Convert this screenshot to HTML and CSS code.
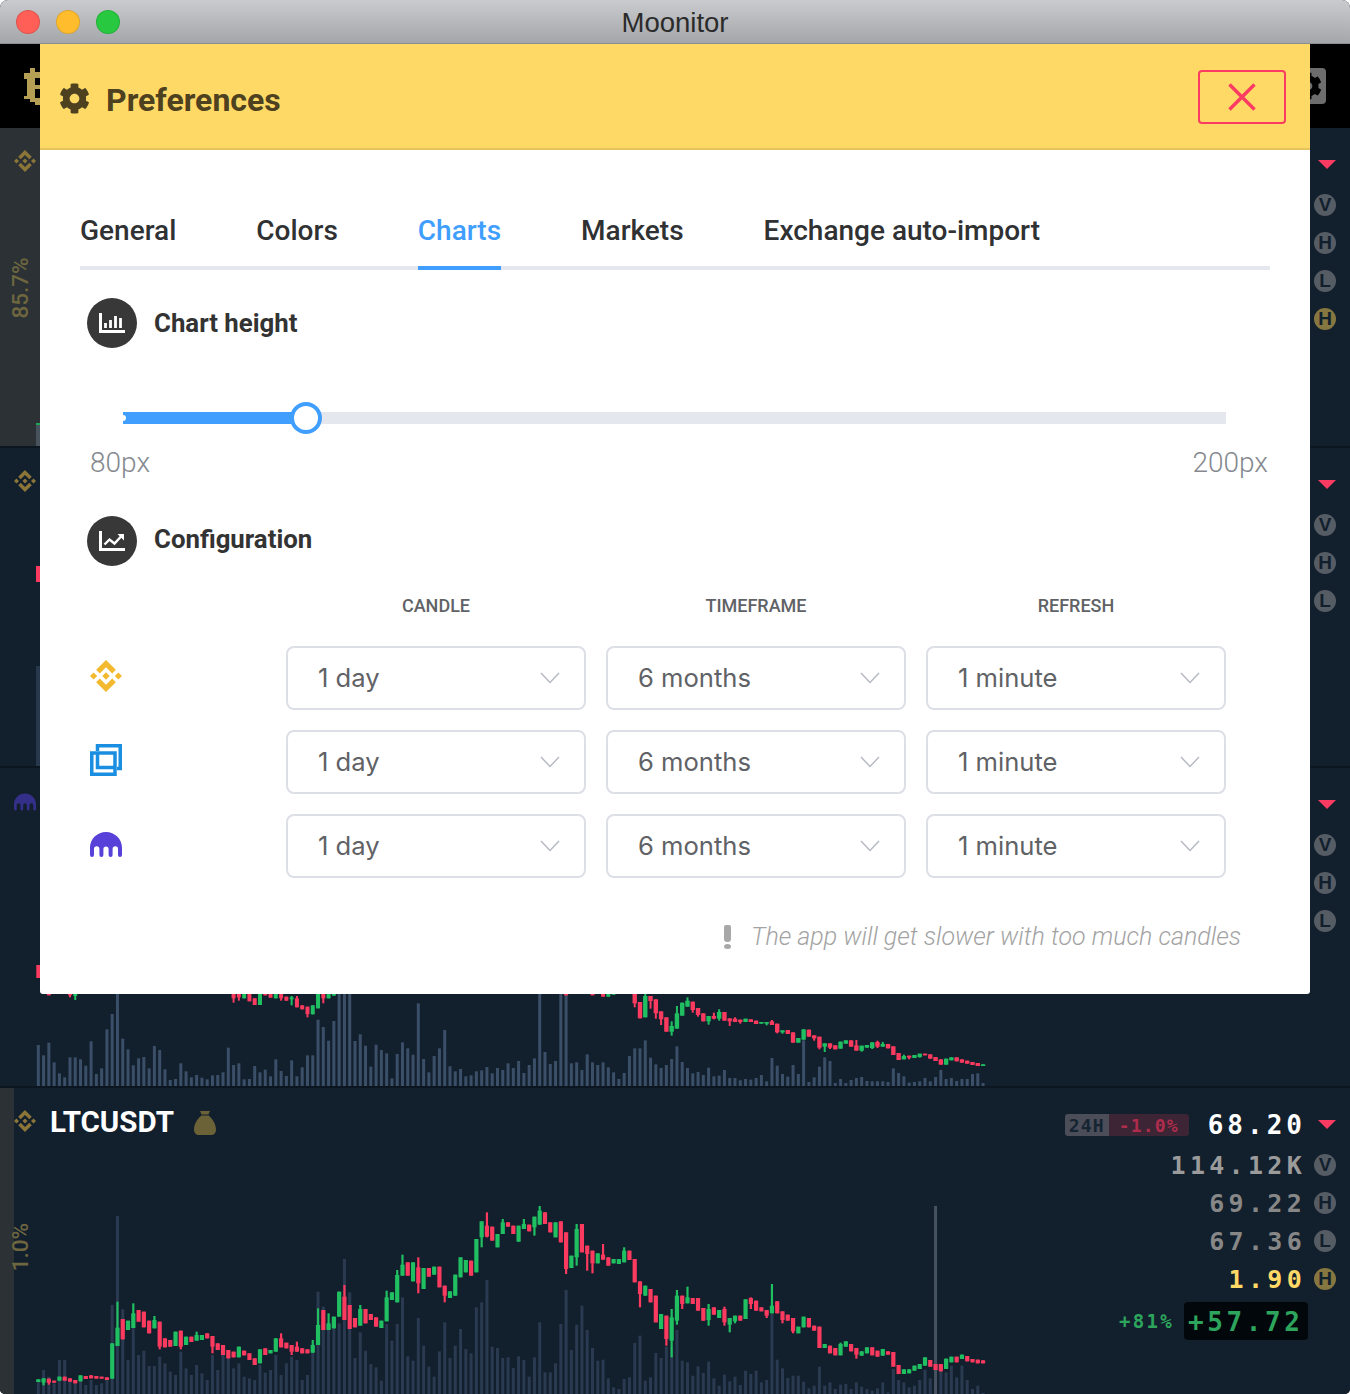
FILE: index.html
```html
<!DOCTYPE html>
<html lang="en">
<head>
<meta charset="utf-8">
<title>Moonitor</title>
<link rel="stylesheet" href="styles.css">
</head>
<body>
<svg class="defs" aria-hidden="true">
  <symbol id="binance" viewBox="0 0 126.61 126.61"><path d="M38.73 53.2L63.3 28.63l24.59 24.59 14.3-14.3L63.3 0 24.43 38.88l14.3 14.32zM0 63.31l14.3-14.3 14.3 14.3-14.3 14.3zM38.73 73.41L63.3 97.98l24.59-24.58 14.31 14.29-38.9 38.91-38.86-38.88-.02-.02 14.31-14.29zM97.99 63.31l14.3-14.3 14.3 14.3-14.3 14.3zM77.83 63.3L63.3 48.76 52.55 59.5l-1.24 1.24-2.54 2.55 14.53 14.53 14.53-14.51z"/></symbol>
  <symbol id="kraken" viewBox="0 0 32 25"><path d="M16 0C7.2 0 0 7 0 15.5V23a2 2 0 0 0 4 0v-6a2.7 2.7 0 0 1 5.4 0v6a2 2 0 0 0 4 0v-6a2.6 2.6 0 0 1 5.2 0v6a2 2 0 0 0 4 0v-6a2.7 2.7 0 0 1 5.4 0v6a2 2 0 0 0 4 0v-7.5C32 7 24.8 0 16 0z"/></symbol>
  <symbol id="cog" viewBox="0 0 512 512"><path d="M487.4 315.7l-42.6-24.6c4.3-23.2 4.3-47 0-70.2l42.6-24.6c4.9-2.8 7.1-8.6 5.5-14-11.1-35.6-30-67.8-54.7-94.6-3.8-4.1-10-5.1-14.8-2.3L380.8 110c-17.9-15.4-38.5-27.3-60.8-35.1V25.8c0-5.6-3.9-10.5-9.4-11.7-36.7-8.2-74.3-7.8-109.2 0-5.5 1.2-9.4 6.1-9.4 11.7V75c-22.2 7.9-42.8 19.8-60.8 35.1L88.7 85.5c-4.9-2.8-11-1.9-14.8 2.3-24.7 26.7-43.6 58.9-54.7 94.6-1.7 5.4.6 11.2 5.5 14L67.3 221c-4.3 23.2-4.3 47 0 70.2l-42.6 24.6c-4.9 2.8-7.1 8.6-5.5 14 11.1 35.6 30 67.8 54.7 94.6 3.8 4.1 10 5.1 14.8 2.3l42.6-24.6c17.9 15.4 38.5 27.3 60.8 35.1v49.2c0 5.6 3.9 10.5 9.4 11.7 36.7 8.2 74.3 7.8 109.2 0 5.5-1.2 9.4-6.1 9.4-11.7v-49.2c22.2-7.9 42.8-19.8 60.8-35.1l42.6 24.6c4.9 2.8 11 1.9 14.8-2.3 24.7-26.7 43.6-58.9 54.7-94.6 1.5-5.5-.7-11.3-5.6-14.1zM256 336c-44.1 0-80-35.9-80-80s35.9-80 80-80 80 35.9 80 80-35.9 80-80 80z"/></symbol>
  <symbol id="chevron" viewBox="0 0 20 12"><path d="M1 1l9 9.5L19 1" fill="none" stroke="currentColor" stroke-width="1.4"/></symbol>
</svg>

<div class="app">
  <header class="titlebar">
    <div class="lights"><span class="light light-red"></span><span class="light light-yellow"></span><span class="light light-green"></span></div>
    <div class="app-name">Moonitor</div>
  </header>

  <div class="topbar">
    <svg class="btc" viewBox="0 0 16 37"><path d="M6 0h5v4h5v33H11v-3H6v-3H0v-3h3V11H0V5h6zM11 10v7h5v-7zM11 21v9h5v-9z" fill-rule="evenodd"/></svg>
    <svg class="top-cog" viewBox="0 0 36 36"><rect width="36" height="36" rx="4" fill="#6d6d6d"/><use href="#cog" x="4" y="4" width="28" height="28" fill="#000"/></svg>
  </div>

  <section class="row row-tall">
    <div class="strip strip-main"></div>
    <svg class="chart" viewBox="0 128 1000 318" width="1000" height="318"><rect x="36" y="423" width="4" height="2" fill="#20a558"/><rect x="36" y="425" width="4" height="21" fill="#47525c"/></svg>
    <svg class="pair-icon icon-binance"><use href="#binance"/></svg>
    <div class="strip-label strip-label-a">85.7%</div>
    <div class="stats">
      <div class="stat stat-first"><span class="arrow"></span></div>
      <div class="stat"><span class="badge">V</span></div>
      <div class="stat"><span class="badge">H</span></div>
      <div class="stat"><span class="badge">L</span></div>
      <div class="stat"><span class="badge badge-gold">H</span></div>
    </div>
  </section>

  <section class="row">
    <svg class="chart" viewBox="0 448 1000 318" width="1000" height="318"><rect x="36" y="566" width="4" height="16" fill="#fa3a5e"/><rect x="36" y="666" width="4" height="100" fill="#28384c"/></svg>
    <svg class="pair-icon icon-binance"><use href="#binance"/></svg>
    <div class="stats">
      <div class="stat stat-first"><span class="arrow"></span></div>
      <div class="stat"><span class="badge">V</span></div>
      <div class="stat"><span class="badge">H</span></div>
      <div class="stat"><span class="badge">L</span></div>
    </div>
  </section>

  <section class="row">
    <svg class="chart" id="chart-a" viewBox="0 768 1000 318" width="1000" height="318"></svg>
    <svg class="pair-icon icon-kraken"><use href="#kraken"/></svg>
    <div class="stats">
      <div class="stat stat-first"><span class="arrow"></span></div>
      <div class="stat"><span class="badge">V</span></div>
      <div class="stat"><span class="badge">H</span></div>
      <div class="stat"><span class="badge">L</span></div>
    </div>
  </section>

  <section class="row row-last">
    <div class="strip strip-small"></div>
    <svg class="chart chart-soft" id="chart-b" viewBox="0 1088 1000 306" width="1000" height="306"></svg>
    <div class="pair">
      <svg class="pair-icon icon-binance"><use href="#binance"/></svg>
      <span class="pair-name">LTCUSDT</span>
      <svg class="bag" viewBox="0 0 22 24"><path d="M6 0h10l-1.6 3.4H7.6zM7.4 4.600h7.200C19 8.400 22 13.600 22 18.400 22 21.800 20 24 17 24H5c-3 0-5-2.200-5-5.600C0 13.600 3 8.400 7.400 4.600z"/></svg>
    </div>
    <div class="strip-label strip-label-b">1.0%</div>
    <div class="stats">
      <div class="stat stat-first">
        <span class="change"><span class="change-key">24H</span><span class="change-val">-1.0%</span></span>
        <span class="value value-price">68.20</span>
        <span class="arrow"></span>
      </div>
      <div class="stat"><span class="value value-vol">114.12K</span><span class="badge">V</span></div>
      <div class="stat"><span class="value value-dim">69.22</span><span class="badge">H</span></div>
      <div class="stat"><span class="value value-dim">67.36</span><span class="badge">L</span></div>
      <div class="stat"><span class="value value-gold">1.90</span><span class="badge badge-gold">H</span></div>
      <div class="stat stat-gain"><span class="gain-pct">+81%</span><span class="gain-box">+57.72</span></div>
    </div>
  </section>
</div>

<div class="modal">
  <div class="modal-head">
    <svg class="modal-cog"><use href="#cog"/></svg>
    <h1 class="modal-title">Preferences</h1>
    <button class="close"><svg viewBox="0 0 28 28" class="close-x"><path d="M1.500 1.500l25 25M26.500 1.500l-25 25"/></svg></button>
  </div>
  <div class="modal-body">
    <nav class="tabs">
      <span class="tab">General</span>
      <span class="tab">Colors</span>
      <span class="tab tab-active">Charts</span>
      <span class="tab">Markets</span>
      <span class="tab">Exchange auto-import</span>
    </nav>

    <div class="section-head section-first">
      <span class="section-icon"><svg viewBox="0 0 26 20"><path class="ico-axis" d="M1.500 0v18.500H26"/><path class="ico-bars" d="M6.500 10v5M11.500 7v8M16.500 3v12M21.500 5v10"/></svg></span>
      <h2 class="section-title">Chart height</h2>
    </div>
    <div class="slider">
      <div class="slider-fill"></div>
      <div class="slider-thumb"></div>
    </div>
    <div class="slider-labels"><span>80px</span><span>200px</span></div>

    <div class="section-head section-second">
      <span class="section-icon"><svg viewBox="0 0 26 20"><path class="ico-axis" d="M1.500 0v18.500H26"/><path class="ico-line" d="M5.500 13.500l5-5 5 4 6.500-7"/><path class="ico-tip" d="M18.500 3h6.500v6.500z"/></svg></span>
      <h2 class="section-title section-title-up">Configuration</h2>
    </div>

    <div class="config">
      <span></span><span class="col-head">CANDLE</span><span class="col-head">TIMEFRAME</span><span class="col-head">REFRESH</span>

      <svg class="logo logo-binance"><use href="#binance"/></svg>
      <div class="select">1 day<svg class="chevron"><use href="#chevron"/></svg></div>
      <div class="select">6 months<svg class="chevron"><use href="#chevron"/></svg></div>
      <div class="select">1 minute<svg class="chevron"><use href="#chevron"/></svg></div>

      <svg class="logo logo-bittrex" viewBox="0 0 32 32"><path d="M1.750 9h23.250v21.250H1.750zM7.500 7V1.750h22.750v22.750H27"/><path d="M7.500 9v14.500H25"/></svg>
      <div class="select">1 day<svg class="chevron"><use href="#chevron"/></svg></div>
      <div class="select">6 months<svg class="chevron"><use href="#chevron"/></svg></div>
      <div class="select">1 minute<svg class="chevron"><use href="#chevron"/></svg></div>

      <svg class="logo logo-kraken"><use href="#kraken"/></svg>
      <div class="select">1 day<svg class="chevron"><use href="#chevron"/></svg></div>
      <div class="select">6 months<svg class="chevron"><use href="#chevron"/></svg></div>
      <div class="select">1 minute<svg class="chevron"><use href="#chevron"/></svg></div>
    </div>

    <p class="note"><span class="note-mark"></span><em>The app will get slower with too much candles</em></p>
  </div>
</div>
<script src="chart.js"></script>
</body>
</html>
```
FILE: styles.css
```css
* { box-sizing: border-box; }
html, body { margin: 0; padding: 0; background: #fff; }
body { width: 1350px; height: 1394px; overflow: hidden; position: relative; font-family: Roboto, sans-serif; }
.defs { display: none; }

.app { height: 1394px; border-radius: 8px 8px 5px 5px; overflow: hidden; background: #121f2d; display: flex; flex-direction: column; }

.titlebar { height: 44px; flex: none; background: linear-gradient(#c9cbce, #a4a6aa); border-bottom: 1px solid #8b8d92; display: flex; align-items: center; position: relative; }
.lights { display: flex; gap: 16px; padding-left: 16px; }
.light { width: 24px; height: 24px; border-radius: 50%; border: 1px solid rgba(0,0,0,.12); }
.light-red { background: #ff5f57; }
.light-yellow { background: #ffbd2e; }
.light-green { background: #28c940; }
.app-name { position: absolute; left: 0; right: 0; top: 1px; text-align: center; font: 27.5px/44px "Liberation Sans", sans-serif; color: #2b2b2b; }

.topbar { height: 84px; flex: none; background: #000; display: flex; justify-content: space-between; align-items: center; padding: 0 24px 0 24px; }
.btc { width: 16px; height: 37px; fill: #b59f55; }
.top-cog { width: 36px; height: 36px; margin-right: 0; }

.row { height: 320px; flex: none; position: relative; background: #121f2d; border-bottom: 2px solid #0c1621; display: flex; justify-content: flex-end; }
.row-last { flex: 1; border-bottom: 0; }
.strip { position: absolute; left: 0; top: 0; bottom: 0; background: #2b3135; }
.strip-main { width: 85.7%; }
.strip-small { width: 14px; }
.chart { position: absolute; left: 0; top: 0; display: block; }
.chart-soft { filter: blur(.4px); }
.pair-icon { position: absolute; left: 14px; top: 22px; }
.icon-binance { width: 22px; height: 22px; fill: #8c7538; }
.icon-kraken { width: 22px; height: 18px; top: 25px; fill: #342f88; }
.pair { position: absolute; left: 0; top: 0; }
.pair-name { position: absolute; left: 50px; top: 16px; font: 700 29.5px/36px Roboto, sans-serif; color: #fff; white-space: nowrap; }
.bag { position: absolute; left: 194px; top: 23px; width: 22px; height: 24px; fill: #6b6238; }
.strip-label { position: absolute; left: 20px; transform: translate(-50%, -50%) rotate(-90deg); font: 500 22.5px/24px Roboto, sans-serif; color: #6e663f; white-space: nowrap; }
.strip-label-a { top: 160px; }
.strip-label-b { top: 159px; }

.stats { position: relative; width: 400px; padding: 14px 14px 0 0; display: flex; flex-direction: column; font-family: "DejaVu Sans Mono", monospace; font-weight: 700; }
.stat { height: 38px; display: flex; align-items: center; justify-content: flex-end; gap: 6px; }
.stat-first { height: 44px; }
.stat-gain { margin-top: 4px; gap: 10px; padding-right: 28px; }
.arrow { width: 0; height: 0; border-left: 9px solid transparent; border-right: 9px solid transparent; border-top: 9px solid #fb3b62; margin-left: 5px; }
.badge { width: 22px; height: 22px; border-radius: 50%; background: #565c64; color: #121f2d; font: 700 19px/22px "Liberation Sans", sans-serif; text-align: center; flex: none; }
.badge-gold { background: #867640; }
.value { font-size: 25px; line-height: 30px; letter-spacing: 4.300px; margin-top: 2px; margin-right: 2px; }
.value-price { color: #fff; font-size: 26px; letter-spacing: 4px; margin-right: 1px; }
.value-vol { color: #9b9b9b; }
.value-dim { color: #878787; }
.value-gold { color: #ffd965; }
.change { display: flex; height: 22px; margin-top: 2px; border-radius: 3px; overflow: hidden; font-size: 18px; line-height: 23px; letter-spacing: 1.200px; margin-right: 13px; text-align: center; }
.change-key { width: 44px; background: #4b4d58; color: #152433; }
.change-val { width: 80px; background: #3d2536; color: #b02c4c; }
.gain-pct { font-size: 19px; letter-spacing: 2.300px; color: #2da55c; line-height: 40px; }
.gain-box { width: 124px; height: 38px; background: #02070c; border-radius: 4px; color: #2da55c; font-size: 26px; line-height: 40px; letter-spacing: 3.600px; padding-left: 4px; white-space: nowrap; }

.modal { position: absolute; left: 40px; top: 44px; width: 1270px; height: 950px; background: #fff; border-radius: 0 0 3px 3px; display: flex; flex-direction: column; }
.modal-head { height: 106px; flex: none; background: #ffd966; border-bottom: 2px solid #e6c45d; display: flex; align-items: center; padding: 2px 24px 0 19px; }
.modal-cog { width: 31px; height: 31px; fill: #4d4120; flex: none; margin-top: 2px; }
.modal-title { margin: 6px 0 0 16px; flex: 1; font: 700 32px/40px Roboto, sans-serif; color: #4d4120; }
.close { width: 88px; height: 54px; padding: 0; background: transparent; border: 2px solid #fb3b62; border-radius: 4px; display: flex; align-items: center; justify-content: center; }
.close-x { width: 28px; height: 28px; fill: none; stroke: #fb3b62; stroke-width: 3.4; }

.modal-body { padding: 44px 40px 0; flex: 1; }
.tabs { display: flex; gap: 80px; height: 76px; border-bottom: 4px solid #e4e7ed; }
.tab { height: 76px; line-height: 74px; font-size: 28px; font-weight: 500; color: #303133; border-bottom: 4px solid transparent; white-space: nowrap; }
.tab-active { color: #409eff; border-bottom-color: #409eff; }

.section-head { display: flex; align-items: center; gap: 17px; padding-left: 7px; height: 50px; }
.section-first { margin-top: 28px; }
.section-second { margin-top: 36px; }
.section-icon { width: 50px; height: 50px; border-radius: 50%; background: #383838; display: flex; align-items: center; justify-content: center; flex: none; }
.section-icon svg { width: 26px; height: 20px; overflow: visible; }
.ico-axis { fill: none; stroke: #fff; stroke-width: 3; }
.ico-bars { fill: none; stroke: #fff; stroke-width: 2.800; }
.ico-line { fill: none; stroke: #fff; stroke-width: 2.400; }
.ico-tip { fill: #fff; }
.section-title { margin: 0; font: 700 25.800px/34px Roboto, sans-serif; color: #333; }
.section-title-up { margin-top: -4px; }

.slider { position: relative; margin: 64px 44px 0 43px; height: 12px; background: #e4e7ed; }
.slider-fill { position: relative; width: 182px; height: 12px; background: #409eff; }
.slider-fill::before { content: ""; position: absolute; left: -3px; top: 3px; width: 6px; height: 6px; border-radius: 50%; background: #fff; }
.slider-thumb { position: absolute; left: 167px; top: -10px; width: 32px; height: 32px; border-radius: 50%; background: #fff; border: 4px solid #409eff; }
.slider-labels { margin-top: 22px; padding: 0 2px 0 10px; display: flex; justify-content: space-between; font-size: 28px; line-height: 34px; font-weight: 300; color: #85898f; }

.config { margin-top: 30px; padding-left: 10px; display: grid; grid-template-columns: 176px 300px 300px 300px; column-gap: 20px; row-gap: 20px; align-items: center; }
.col-head { text-align: center; font-size: 18px; line-height: 20px; font-weight: 500; color: #606266; margin-bottom: 10px; }
.logo { display: block; width: 32px; height: 32px; }
.logo-binance { fill: #f3ba2f; margin-top: -4px; }
.logo-bittrex { fill: none; stroke: #1a8ee0; stroke-width: 3.500; margin-top: -4px; }
.logo-kraken { fill: #5741d9; height: 25px; margin-top: -3px; }
.select { height: 64px; border: 2px solid #dcdfe6; border-radius: 8px; padding: 0 24px 0 30px; display: flex; align-items: center; justify-content: space-between; font: 25.600px/60px Inter, sans-serif; color: #606266; }
.chevron { width: 20px; height: 12px; color: #b4b8c0; }

.note { margin: 44px 29px 0 0; display: flex; justify-content: flex-end; align-items: center; gap: 20px; font-size: 25px; line-height: 30px; font-weight: 300; color: #a3a3a3; }
.note em { font-style: italic; }
.note-mark { position: relative; width: 7px; height: 24px; }
.note-mark::before { content: ""; position: absolute; left: 0; top: 0; width: 7px; height: 17px; background: #a8a8a8; border-radius: 2px 2px 3px 3px; }
.note-mark::after { content: ""; position: absolute; left: 0; bottom: 0; width: 7px; height: 5px; background: #a8a8a8; border-radius: 50%; }
```
FILE: chart.js
```js
var NS = 'http://www.w3.org/2000/svg';
var RED = '#fa3a5e', GREEN = '#20bf62';
function X(i) { return 38.3 + 5.278 * i; }
function rect(svg, x, y, w, h, fill) {
  var r = document.createElementNS(NS, 'rect');
  r.setAttribute('x', x); r.setAttribute('y', y);
  r.setAttribute('width', w); r.setAttribute('height', Math.max(h, 0));
  r.setAttribute('fill', fill);
  svg.appendChild(r);
}
/* candle: [index, 'r'|'g', bodyTop, bodyBottom, wickTop?, wickBottom?] in zoomed pixels */
function candle(svg, c, y0, bw, ww) {
  var col = c[1] === 'r' ? RED : GREEN, x = X(c[0]);
  var t = y0 + c[2] / 3, b = y0 + c[3] / 3;
  var wt = c[4] ? y0 + c[4] / 3 : t, wb = c[5] ? y0 + c[5] / 3 : b;
  rect(svg, x - ww / 2, wt, ww, wb - wt, col);
  rect(svg, x - bw / 2, t, bw, b - t, col);
}
function seq(start, str) {
  return str.trim().split(/\s+/).map(function (s, k) {
    var p = s.split(',');
    return [start + k, p[0], +p[1], +p[2], +p[3] || 0, +p[4] || 0];
  });
}

/* ---------- third row ---------- */
var a = document.getElementById('chart-a');
var volA = [195,226,188,247,280,292,232,232,238,257,184,282,265,148,102,40,176,208,256,235,231,265,198,210,268,300,297,250,274,292,285,293,298,286,285,277,203,255,250,298,297,258,277,269,289,238,273,288,241,289,262,226,226,119,141,182,123,45,40,40,183,163,197,260,194,210,220,295,222,187,205,224,70,237,277,228,205,150,259,274,267,289,286,274,271,261,280,264,
270,250,264,243,279,255,235,40,216,252,243,40,40,250,247,270,223,247,255,247,262,277,297,279,228,205,205,181,233,253,264,255,237,199,246,264,280,276,285,263,289,287,270,294,294,301,297,299,294,285,304,234,257,282,290,255,282,181,306,292,260,232,243,309,297,309,300,294,291,303,304,304,304,306,265,279,289,308,306,304,294,304,291,270,297,294,303,297,297,282,280,309];
volA.forEach(function (t, i) { var y = t <= 45 ? 940 : 980 + t / 3; rect(a, X(i) - 1.5, y, 3, 1086 - y, '#3b4f68'); });
candle(a, [0, 'r', -45, -6, 0, 0], 980, 4, 2);
[[2,'r',30,46],[6,'r',30,46,0,52],[7,'g',30,48,0,60]].forEach(function (c) { candle(a, c, 980, 4, 2); });
seq(37, 'r,30,55,0,68 r,42,52,30,62 g,30,55 r,30,64 r,55,75 g,30,75 r,30,46 r,30,53 g,30,55 r,30,55,0,62 r,50,62 g,52,58,48,76 r,55,82,48 r,76,88 r,80,102,0,112 g,76,103 g,30,85 r,30,55,0,70 g,30,55 g,30,47').forEach(function (c) { candle(a, c, 980, 4, 2); });
[[100,'r',30,46],[105,'r',30,46],[107,'r',30,50],[108,'g',30,50],[109,'g',30,44]].forEach(function (c) { candle(a, c, 980, 4, 2); });
seq(113, 'r,30,70,0,82 r,66,115 g,48,112,42 r,48,63,0,86 r,58,100,0,116 r,94,118,0,135 r,112,155 g,138,155,124,167 g,100,146,78 g,68,107 g,62,80,52 r,65,90,0,98 r,84,105,0,110 r,100,124 g,108,124,0,134 r,108,116,98,118 g,96,116,88,122 r,96,122 r,115,124,0,138 r,116,126,112 r,119,126,0,131 g,116,126 r,118,126 r,122,132 g,126,131 g,126,131,0,136 r,124,135,120 r,131,157,0,160 g,151,157,0,161 r,150,162 r,157,188 g,174,188 g,148,179 r,149,170 r,166,175,0,182 r,170,203,0,208 g,190,200,0,216 r,190,203,0,207 r,196,208 g,185,206 g,181,191 r,181,200 r,196,212,180 g,197,212,0,215 g,195,203 g,187,204,0,207 r,186,200,182,204 g,192,200,186 r,192,205 r,199,225 r,219,240 g,228,238,224 r,227,233,0,238 g,225,234 g,221,231,0,233 r,221,226 r,223,236 r,231,243 r,238,254 g,236,254 g,232,241 r,232,244 r,238,248 r,242,251 r,246,255 r,249,258 g,253,258').forEach(function (c) { candle(a, c, 980, 4.4, 2); });

/* ---------- last row ---------- */
var b = document.getElementById('chart-b');
var tops = {};
[870,840,860,880,810,810,870,880,860,885,870,885,880,870,645,378,658,810,700,795,782,828,828,800,820,845,855,785,835,855,825,850,870,795,840,795,780,835,820,860,865,870,825,848,840,795,855,820,800,810,870,855,780,605,650,700,700,700].forEach(function (z, i) { tops[i] = 1090 + z / 3; });
[195,295,492,415,470,510,520,560,390,440,390,310,487,500,372,455,518,548,472,385,492,455,405,465,478,340,325,258,458,462,492,490,522,487,498,548,490,385,535,535,508,390,288,468,392,335,408,462,500,497,553,580,585,555,550,447,425,560,550,477,492,458,460,408,500,505,545,517,537,503,553,575,542,562,548,573,530,540,530,565,558,360,497,523,552,545,545,563,583,575,518,575,565,585,572,570,585,565,578,585,590,583,565,595,525,558,565,580,575,558,527,553,36,530,535,515,550,515,558,585,575,597].forEach(function (z, k) { tops[58 + k] = 1194 + z / 3; });
for (var i = 0; i < 180; i++) {
  rect(b, X(i) - 1.5, tops[i], 3, 1394 - tops[i], i === 170 ? '#465262' : '#2a3a50');
}
seq(0, 'g,868,876 g,865,878,0,886 r,866,878,0,884 r,872,878 g,860,872 r,860,872 r,865,875 r,870,880 g,856,874 r,858,867 r,856,865 r,858,866 r,860,866 r,862,870 g,760,866 g,713,768,635 r,687,748 g,692,720 g,670,714,640 r,660,695 r,665,712 r,692,730 g,690,715,678 r,695,770,0,778 r,745,772 r,750,770 g,725,768 r,722,770,0,778 g,740,765 r,740,756 g,735,752,725 g,735,750 r,730,745 r,738,770,0,790 r,760,780 r,765,795 r,780,805 r,785,802 g,770,802 r,782,796 r,790,810 r,805,825 g,778,820 r,775,795 g,780,790 g,745,785 r,745,772,730 r,758,775 r,765,785,0,795 r,770,785,755 r,775,790 r,778,790 g,765,788,750 g,705,765,655 r,660,720 g,700,720,670 g,680,715 g,605,680 r,620,690,585').forEach(function (c) { candle(b, c, 1090, 4.2, 2.2); });
seq(59, 'r,333,405 r,372,400 g,345,395,333 r,345,388 r,360,378 r,370,398 g,380,402 g,310,382,290 g,295,318 g,243,325,228 g,212,245,182 r,205,245 g,205,262 r,220,268,190,298 g,222,285 r,222,248 g,218,242 r,218,280 r,275,305,0,325 g,292,312 g,242,305 g,190,250 g,198,235 r,200,245 g,135,235 g,82,130,0,160 r,95,128,55,130 r,98,140 g,120,160 g,85,120,75 r,85,98 r,95,120 g,95,143 g,90,105,75 r,92,112 g,68,100,0,125 g,50,92,36 r,55,90 r,85,115 g,85,130 r,82,145 r,115,225,0,240 g,185,222 g,105,190,90,215 r,90,175 r,155,180,0,230 r,170,208,0,238 g,178,208 r,182,197,150 r,190,215 g,195,208 g,195,210 g,170,205,160 r,170,198 r,195,265 r,262,300,0,340 g,275,305 r,285,325 r,305,385 g,360,405 r,365,435,0,455 g,370,440,345,490 g,305,380,288,392').forEach(function (c) { candle(b, c, 1194, 4.2, 2.2); });
seq(122, 'r,305,330,0,345 g,310,328,278 r,312,330 r,312,350 r,342,380 g,345,378,330,395 r,340,362 g,348,372 r,345,385,338,395 g,372,392,0,415 g,365,382,0,388 r,365,380 g,316,375 r,312,330,310,345 r,320,350 r,340,352 r,348,365,0,372 g,335,358,270 r,322,358 r,352,378,0,388 r,362,380 r,372,412,0,418 g,398,418 g,368,400 r,372,400 r,395,410 r,398,462 g,450,462 r,455,478 r,462,484 g,450,484,446 g,442,458 r,450,472 r,462,482,0,494 g,472,485 g,460,478 r,460,484 r,470,488 g,465,485 r,472,482 r,474,518 r,513,540 g,526,540 g,526,538 g,515,530 g,510,525 g,490,515 r,498,518 r,510,528 r,510,532 g,494,525 g,488,505 r,488,505 g,482,495 r,486,502 r,495,505 r,497,508 r,499,508').forEach(function (c) { candle(b, c, 1194, 4.2, 2.2); });
```
